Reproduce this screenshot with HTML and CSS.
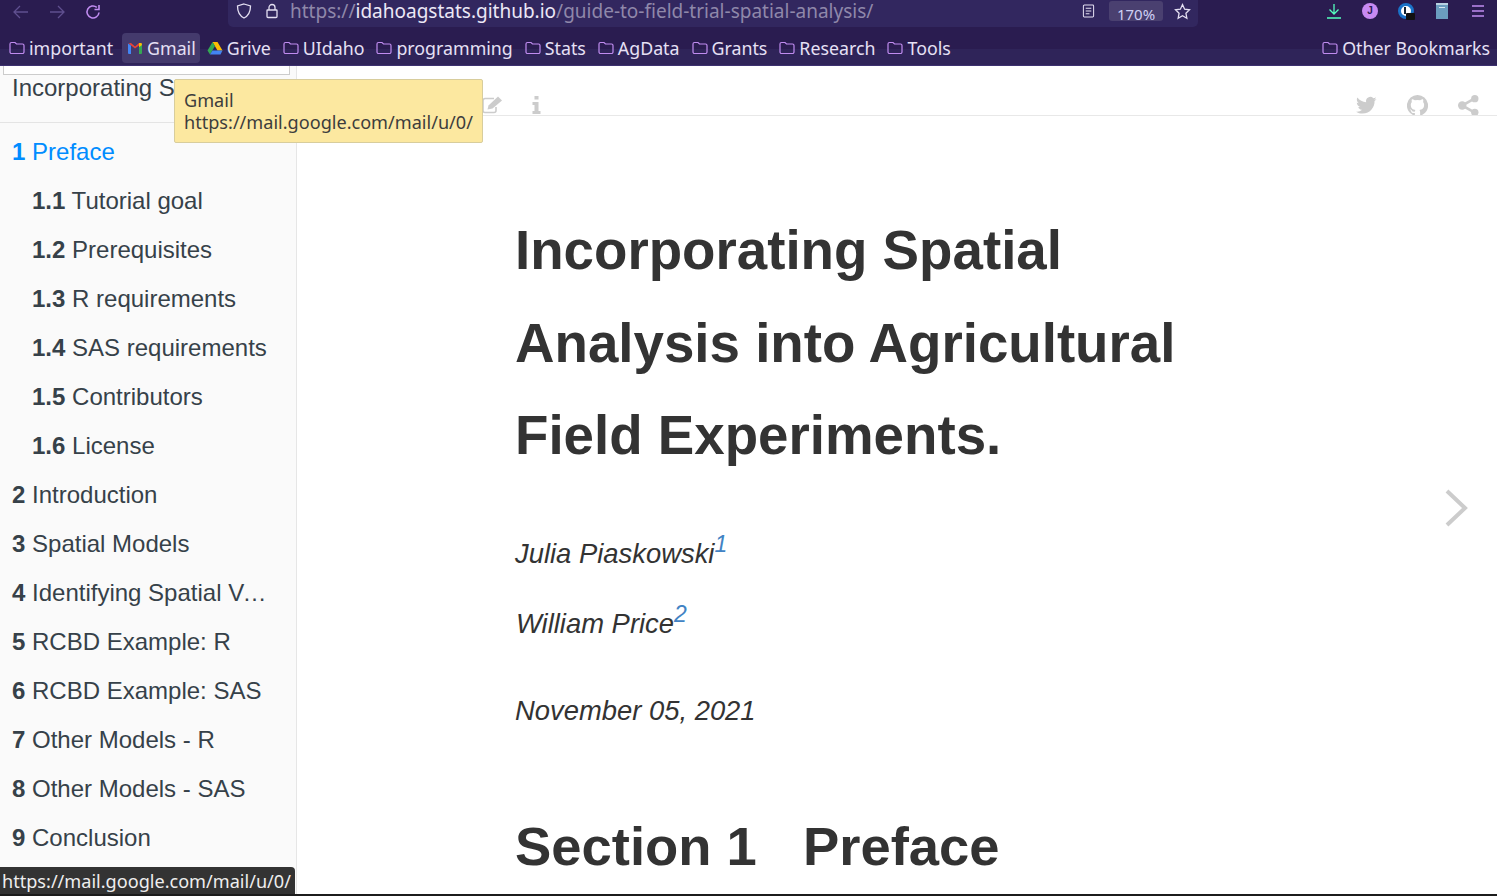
FILE: index.html
```html
<!DOCTYPE html>
<html lang="en">
<head>
  <meta charset="UTF-8">
  <title>Incorporating Spatial Analysis into Agricultural Field Experiments.</title>
  <link rel="stylesheet" href="styles.css">
</head>
<body>
  <svg class="defs" width="0" height="0">
    <symbol id="folder" viewBox="0 0 16 14"><path d="M1 3a1.500 1.500 0 0 1 1.500-1.500h3.500l1.500 1.500h6a1.500 1.500 0 0 1 1.500 1.500v6.500a1.500 1.500 0 0 1-1.500 1.500h-11a1.500 1.500 0 0 1-1.500-1.500z" fill="none" stroke="#c08cf0" stroke-width="1.200"/></symbol>
  </svg>

  <header class="browser">
    <div class="toolbar">
      <div class="nav-btns">
        <svg class="nav-icon" viewBox="0 0 16 16"><path d="M15 8H1M7 2L1 8l6 6" fill="none" stroke="#5f4f8f" stroke-width="1.300"/></svg>
        <svg class="nav-icon" viewBox="0 0 16 16"><path d="M1 8h14M9 2l6 6-6 6" fill="none" stroke="#5f4f8f" stroke-width="1.300"/></svg>
        <svg class="nav-icon" viewBox="0 0 16 16"><path d="M14 8.500A6 6 0 1 1 11.800 3.300M14 1v4.500h-4.500" fill="none" stroke="#c08cf0" stroke-width="1.600"/></svg>
      </div>
      <div class="urlbar">
        <svg class="url-icon" viewBox="0 0 16 16"><path d="M8 1l6.500 2c0 5.500-1.500 9.500-6.500 12C3 12.500 1.500 8.500 1.500 3z" fill="none" stroke="#e4dff2" stroke-width="1.300"/></svg>
        <svg class="url-icon" viewBox="0 0 16 16"><path d="M5 7V4.500a3 3 0 0 1 6 0V7M3.500 7h9a.5.5 0 0 1 .5.5v6a1 1 0 0 1-1 1H4a1 1 0 0 1-1-1v-6a.5.5 0 0 1 .5-.5z" fill="none" stroke="#e4dff2" stroke-width="1.300"/></svg>
        <div class="url-text"><span class="dim">https://</span>idahoagstats.github.io<span class="dim">/guide-to-field-trial-spatial-analysis/</span></div>
        <svg class="reader" viewBox="0 0 14 16"><path d="M2.500 1.500h9a1 1 0 0 1 1 1v11a1 1 0 0 1-1 1h-9a1 1 0 0 1-1-1v-11a1 1 0 0 1 1-1zM4 5h6M4 8h6M4 11h4" fill="none" stroke="#e4dff2" stroke-width="1.100"/></svg>
        <span class="zoom-level">170%</span>
        <svg class="star" viewBox="0 0 16 16"><path d="M8 1.500l2 4.300 4.600.6-3.400 3.200.9 4.700L8 12l-4.100 2.300.9-4.700L1.400 6.400 6 5.800z" fill="none" stroke="#e4dff2" stroke-width="1.200"/></svg>
      </div>
      <div class="addons">
        <svg class="addon" viewBox="0 0 16 16"><path d="M8 1v10M3.500 6.500L8 11l4.500-4.500M1 15h14" fill="none" stroke="#54ffbd" stroke-width="1.300"/></svg>
        <span class="avatar">J</span>
        <span class="key-addon"><span class="key-bar"></span><span class="key-lock"></span></span>
        <span class="book-addon"><span class="book-label"></span></span>
        <svg class="addon menu" viewBox="0 0 16 16"><path d="M2 3h12M2 8h12M2 13h12" fill="none" stroke="#c08cf0" stroke-width="1.400"/></svg>
      </div>
    </div>
    <nav class="bookmarks">
      <a class="bm first"><svg class="bm-icon"><use href="#folder"/></svg>important</a>
      <a class="bm active">
        <svg class="bm-icon" viewBox="0 0 16 14"><path d="M8 7.500L1.500 2.500 4 2l4 3.500L12 2l2.500.5z" fill="#ea4335"/><path d="M1 2.500L4 4.500V13H2a1 1 0 0 1-1-1z" fill="#4285f4"/><path d="M15 2.500L12 4.500V13h2a1 1 0 0 0 1-1z" fill="#34a853"/><path d="M12 2h2.500L15 4l-3 2.200z" fill="#fbbc04"/></svg>Gmail</a>
      <a class="bm">
        <svg class="bm-icon" viewBox="0 0 16 14"><path d="M5.500 1h5l5 8.500h-5z" fill="#fbbc04"/><path d="M5.500 1L.500 9.500 3 13.500 8 5z" fill="#34a853"/><path d="M3 13.500h10.500l2-4H5.500z" fill="#4285f4"/></svg>Grive</a>
      <a class="bm"><svg class="bm-icon"><use href="#folder"/></svg>UIdaho</a>
      <a class="bm"><svg class="bm-icon"><use href="#folder"/></svg>programming</a>
      <a class="bm"><svg class="bm-icon"><use href="#folder"/></svg>Stats</a>
      <a class="bm"><svg class="bm-icon"><use href="#folder"/></svg>AgData</a>
      <a class="bm"><svg class="bm-icon"><use href="#folder"/></svg>Grants</a>
      <a class="bm"><svg class="bm-icon"><use href="#folder"/></svg>Research</a>
      <a class="bm"><svg class="bm-icon"><use href="#folder"/></svg>Tools</a>
      <a class="bm other"><svg class="bm-icon"><use href="#folder"/></svg>Other Bookmarks</a>
    </nav>
  </header>

  <div class="book">
    <aside class="sidebar">
      <div class="search-box"></div>
      <div class="book-title">Incorporating Spatial Analysis</div>
      <ul class="toc">
        <li class="current"><b>1</b> Preface</li>
        <li class="sub"><b>1.1</b> Tutorial goal</li>
        <li class="sub"><b>1.2</b> Prerequisites</li>
        <li class="sub"><b>1.3</b> R requirements</li>
        <li class="sub"><b>1.4</b> SAS requirements</li>
        <li class="sub"><b>1.5</b> Contributors</li>
        <li class="sub"><b>1.6</b> License</li>
        <li><b>2</b> Introduction</li>
        <li><b>3</b> Spatial Models</li>
        <li><b>4</b> Identifying Spatial Variation</li>
        <li><b>5</b> RCBD Example: R</li>
        <li><b>6</b> RCBD Example: SAS</li>
        <li><b>7</b> Other Models - R</li>
        <li><b>8</b> Other Models - SAS</li>
        <li><b>9</b> Conclusion</li>
      </ul>
    </aside>

    <main class="content">
      <div class="book-header">
        <div class="tools-left">
          <svg class="tool edit" viewBox="0 0 21 18"><path d="M14 11v3.500a2 2 0 0 1-2 2H3a2 2 0 0 1-2-2V4.500a2 2 0 0 1 2-2h9" fill="none" stroke="#ccc" stroke-width="1.600"/><path d="M5.500 13.500l1-4L16 .500l4 4-9.500 8z" fill="#ccc"/></svg>
          <svg class="tool info" viewBox="0 0 9 18"><path d="M2.500 0h4v3.500h-4zM.500 6h6v9h2v3H.500v-3h2V9h-2z" fill="#ccc"/></svg>
        </div>
        <div class="tools-right">
          <svg class="tool" viewBox="0 0 24 20"><path d="M23.500 2.500c-.9.400-1.800.6-2.800.8 1-.6 1.800-1.500 2.100-2.700-.9.600-2 1-3 1.200A4.800 4.800 0 0 0 11.600 6.200C7.600 6 4 4.100 1.600.9c-1.300 2.200-.6 5 1.500 6.400-.8 0-1.500-.2-2.200-.6 0 2.300 1.600 4.300 3.900 4.800-.7.200-1.400.2-2.200.1.600 1.900 2.400 3.300 4.500 3.300A9.700 9.700 0 0 1 0 17c2.200 1.400 4.700 2.200 7.400 2.200 9 0 14.100-7.600 13.800-14.400 1-.7 1.800-1.500 2.300-2.300z" fill="#ccc"/></svg>
          <svg class="tool" viewBox="0 0 20 20"><path fill-rule="evenodd" d="M10 0a10 10 0 0 0-3.200 19.500c.5.100.7-.2.700-.5v-1.900c-2.800.6-3.400-1.200-3.400-1.200-.4-1.200-1.100-1.500-1.100-1.500-.9-.6.100-.6.100-.6 1 .1 1.500 1 1.500 1 .9 1.500 2.300 1.100 2.900.8.100-.6.300-1.100.6-1.300-2.200-.3-4.500-1.100-4.500-4.900 0-1.100.4-2 1-2.700-.1-.3-.4-1.300.1-2.600 0 0 .8-.3 2.800 1a9.500 9.500 0 0 1 5 0c1.900-1.300 2.700-1 2.700-1 .6 1.300.2 2.300.1 2.600.6.700 1 1.600 1 2.700 0 3.800-2.300 4.600-4.500 4.900.4.300.7.900.7 1.800V19c0 .3.200.6.700.5A10 10 0 0 0 10 0z" fill="#ccc"/></svg>
          <svg class="tool" viewBox="0 0 20 20"><path d="M15.500 3.500L4 10l11.500 6.500" fill="none" stroke="#ccc" stroke-width="2.500"/><circle cx="16" cy="3.500" r="3.500" fill="#ccc"/><circle cx="4" cy="10" r="4" fill="#ccc"/><circle cx="16" cy="16.500" r="3.500" fill="#ccc"/></svg>
        </div>
      </div>

      <div class="page">
        <h1 class="page-title">Incorporating Spatial Analysis into Agricultural Field Experiments.</h1>
        <p class="author">Julia Piaskowski<sup>1</sup></p>
        <p class="author second">William Price<sup>2</sup></p>
        <p class="date">November 05, 2021</p>
        <h1 class="section"><span class="sec-num">Section 1</span>Preface</h1>
      </div>

      <svg class="next" viewBox="0 0 24 38"><path d="M3 2l18 17L3 36" fill="none" stroke="#ccc" stroke-width="4"/></svg>
    </main>
  </div>

  <div class="tooltip">Gmail<br>https://mail.google.com/mail/u/0/</div>
  <div class="status">https://mail.google.com/mail/u/0/</div>
  <div class="taskbar-edge"></div>
</body>
</html>
```

FILE: styles.css
```css
html, body {
  margin: 0;
  padding: 0;
  height: 896px;
  overflow: hidden;
  background-color: #fff;
}
.defs {
  position: absolute;
}
.browser {
  height: 66px;
  font-family: "Noto Sans", sans-serif;
  color: #e6e0f5;
  background: linear-gradient(#2a1c50 49px, #2f2459 49px);
  border-bottom: 1px solid #3d3170;
  box-sizing: border-box;
}
.toolbar {
  height: 27px;
  display: flex;
  align-items: flex-start;
}
.nav-btns {
  width: 228px;
  display: flex;
  gap: 20px;
  padding: 4px 0 0 13px;
  box-sizing: border-box;
}
.nav-icon {
  width: 16px;
  height: 16px;
}
.urlbar {
  width: 970px;
  height: 27px;
  display: flex;
  align-items: flex-start;
  background-color: #32275f;
  border-radius: 0 0 5px 5px;
  box-sizing: border-box;
  padding: 3px 7px 0 8px;
}
.url-icon {
  width: 16px;
  height: 16px;
  margin-right: 12px;
}
.url-icon + .url-icon {
  margin-right: 10px;
}
.url-text {
  flex: 1;
  font-size: 19px;
  line-height: 22px;
  color: #ece8f6;
  white-space: nowrap;
  margin-top: -3px;
}
.url-text .dim {
  color: #8f88aa;
}
.reader {
  width: 13px;
  height: 16px;
  margin-right: 14px;
}
.zoom-level {
  width: 54px;
  height: 20px;
  margin: -2px 10px 0 0;
  background-color: #4a4070;
  border-radius: 3px;
  font-size: 15px;
  line-height: 27px;
  text-align: center;
  color: #cfd0f5;
  overflow: hidden;
}
.star {
  width: 17px;
  height: 17px;
  margin-left: 1px;
}
.addons {
  flex: 1;
  display: flex;
  align-items: flex-start;
  justify-content: flex-end;
  gap: 20px;
  padding: 3px 11px 0 0;
}
.addon {
  width: 16px;
  height: 16px;
}
.avatar {
  width: 16px;
  height: 16px;
  border-radius: 50%;
  background-color: #c78af2;
  color: #2a1c52;
  font: bold 10px/16px "Liberation Sans", sans-serif;
  text-align: center;
}
.key-addon {
  position: relative;
  width: 16px;
  height: 16px;
  border-radius: 50%;
  background-color: #fff;
  border: 3px solid #1a73c8;
  box-sizing: border-box;
}
.key-bar {
  position: absolute;
  left: 3px;
  top: 1px;
  width: 2px;
  height: 7px;
  background-color: #123;
}
.key-lock {
  position: absolute;
  right: -4px;
  bottom: -4px;
  width: 9px;
  height: 7px;
  background-color: #111;
  border-radius: 1px;
}
.book-addon {
  width: 12px;
  height: 16px;
  background-color: #6b9dbf;
  border-top: 2px solid #b8d2e2;
  box-sizing: border-box;
  margin: 0 2px;
}
.book-label {
  display: block;
  width: 6px;
  height: 1px;
  margin: 2px auto 0;
  background-color: #d6e6ef;
}
.bookmarks {
  height: 38px;
  display: flex;
  align-items: center;
  padding: 3px 7px 0 4px;
  box-sizing: border-box;
  font-size: 17.800px;
}
.bm {
  height: 30px;
  display: flex;
  align-items: center;
  padding: 0 5px;
  margin-right: 2px;
  border-radius: 4px;
  white-space: nowrap;
  color: #e6e0f5;
}
.bm.first {
  margin-right: 4px;
}
.bm.active {
  padding-right: 4px;
  background-color: #443a6c;
}
.bm.other {
  margin: 0 0 0 auto;
  padding-right: 0;
}
.bm-icon {
  width: 16px;
  height: 14px;
  margin-right: 4px;
}

.book {
  display: flex;
  height: 830px;
  font-family: "Liberation Sans", Arial, sans-serif;
}
.sidebar {
  width: 297px;
  flex: none;
  background-color: #fafafa;
  border-right: 1px solid #e6e6e6;
  box-sizing: border-box;
  color: #364149;
  overflow: hidden;
}
.search-box {
  height: 8px;
  margin: 0 6px 0 3px;
  border: 1px solid #ccc;
  border-top: none;
  background-color: #fff;
}
.book-title {
  height: 47px;
  padding: 0 0 0 12px;
  font-size: 24px;
  line-height: 25px;
  white-space: nowrap;
  border-bottom: 1px solid #e4e4e4;
}
.toc {
  list-style: none;
  margin: 0;
  padding: 4px 0 0;
  font-size: 24px;
}
.toc li {
  height: 49px;
  line-height: 49px;
  padding: 0 28px 0 12px;
  white-space: nowrap;
  overflow: hidden;
  text-overflow: ellipsis;
}
.toc li.sub {
  padding-left: 32px;
}
.toc li.current {
  color: #008cff;
}

.content {
  flex: 1;
  position: relative;
  overflow: hidden;
  color: #333;
}
.book-header {
  height: 50px;
  display: flex;
  justify-content: space-between;
  align-items: flex-end;
  border-bottom: 1px solid #e8e8e8;
  box-sizing: border-box;
  overflow: hidden;
}
.tools-left {
  display: flex;
  align-items: flex-start;
  gap: 29px;
  padding: 0 0 1px 185px;
}
.tool {
  width: 21px;
  height: 21px;
  display: block;
}
.tool.edit {
  height: 18px;
}
.tool.info {
  width: 9px;
  height: 18px;
}
.tools-right {
  display: flex;
  gap: 30px;
  padding-right: 18px;
  margin-bottom: -1px;
}
.page {
  width: 680px;
  padding: 88px 0 0 218px;
}
.page-title {
  margin: 0;
  font-size: 54.700px;
  line-height: 92.500px;
  font-weight: bold;
}
.author, .date {
  margin: 0;
  font-size: 27.400px;
  font-style: italic;
  line-height: 38px;
}
.author {
  padding-top: 53px;
}
.author sup {
  font-size: 23px;
  line-height: 0;
  vertical-align: 11px;
  color: #4183c4;
}
.author.second {
  padding: 32px 0 0 1px;
}
.date {
  padding-top: 49px;
}
.section {
  margin: 0;
  padding-top: 83px;
  font-size: 54.400px;
  line-height: 68px;
  font-weight: bold;
  white-space: nowrap;
}
.sec-num {
  display: inline-block;
  width: 288px;
}
.next {
  position: absolute;
  left: 1147px;
  top: 423px;
  width: 24px;
  height: 38px;
}

.tooltip {
  position: absolute;
  left: 174px;
  top: 79px;
  width: 309px;
  height: 64px;
  box-sizing: border-box;
  padding: 9px;
  background-color: #fce8a0;
  border: 1px solid #d8cd9c;
  border-radius: 2px;
  font-family: "Noto Sans", sans-serif;
  font-size: 18.100px;
  line-height: 22px;
  color: #3d3d3d;
  white-space: nowrap;
}
.status {
  position: absolute;
  left: 0;
  top: 867px;
  height: 27px;
  width: 295px;
  box-sizing: border-box;
  padding-left: 2px;
  background-color: #333;
  border-radius: 0 4px 0 0;
  font-family: "Noto Sans", sans-serif;
  font-size: 18.100px;
  line-height: 28px;
  color: #eee;
  white-space: nowrap;
}
.taskbar-edge {
  position: absolute;
  left: 0;
  right: 0;
  top: 894px;
  height: 2px;
  background-color: #1c1c1c;
}
```
